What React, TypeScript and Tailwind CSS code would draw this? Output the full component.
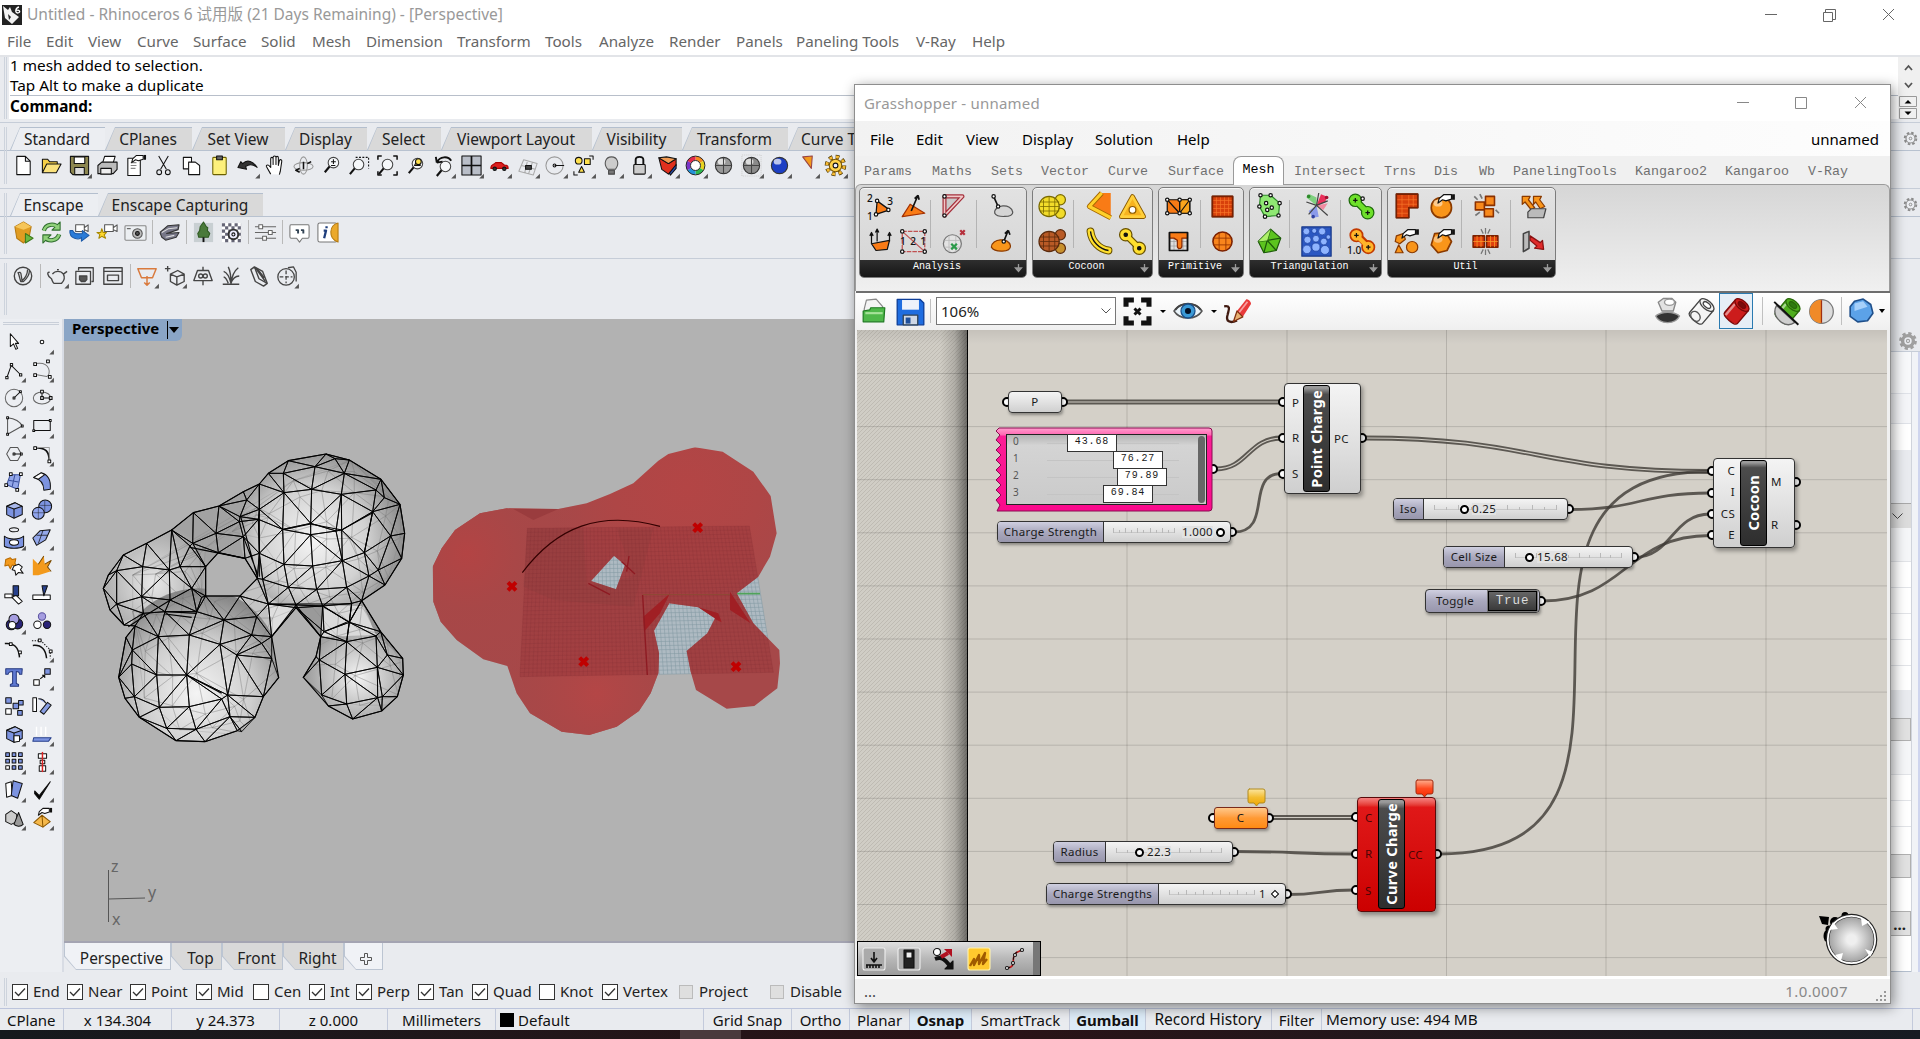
import React from 'react';

type Pt = [number, number];

/* ---------- geometry helpers ---------- */

function delaunay(pts: Pt[]): number[][] {
  const n = pts.length;
  const all: Pt[] = [...pts, [-9000, -9000], [9000, -9000], [600, 12000]];
  let tris: number[][] = [[n, n + 1, n + 2]];
  const inCircle = (t: number[], p: Pt) => {
    const [a, b, c] = t.map((i) => all[i]);
    const d = 2 * (a[0] * (b[1] - c[1]) + b[0] * (c[1] - a[1]) + c[0] * (a[1] - b[1]));
    if (Math.abs(d) < 1e-9) return true;
    const q = (v: Pt) => v[0] * v[0] + v[1] * v[1];
    const ux = (q(a) * (b[1] - c[1]) + q(b) * (c[1] - a[1]) + q(c) * (a[1] - b[1])) / d;
    const uy = (q(a) * (c[0] - b[0]) + q(b) * (a[0] - c[0]) + q(c) * (b[0] - a[0])) / d;
    return Math.hypot(p[0] - ux, p[1] - uy) < Math.hypot(a[0] - ux, a[1] - uy);
  };
  for (let i = 0; i < n; i++) {
    const bad = tris.filter((t) => inCircle(t, all[i]));
    const count: Record<string, number[]> = {};
    const seen: Record<string, number> = {};
    bad.forEach((t) =>
      [[t[0], t[1]], [t[1], t[2]], [t[2], t[0]]].forEach((e) => {
        const k = Math.min(e[0], e[1]) + '_' + Math.max(e[0], e[1]);
        seen[k] = (seen[k] || 0) + 1;
        count[k] = e;
      })
    );
    tris = tris.filter((t) => !bad.includes(t));
    Object.keys(seen).forEach((k) => {
      if (seen[k] === 1) tris.push([count[k][0], count[k][1], i]);
    });
  }
  return tris.filter((t) => t.every((i) => i < n));
}

function inside(p: Pt, poly: Pt[]) {
  let r = false;
  for (let i = 0, j = poly.length - 1; i < poly.length; j = i++) {
    const a = poly[i];
    const b = poly[j];
    if (a[1] > p[1] !== b[1] > p[1] && p[0] < ((b[0] - a[0]) * (p[1] - a[1])) / (b[1] - a[1]) + a[0]) r = !r;
  }
  return r;
}

const toPath = (p: Pt[]) => 'M' + p.map((v) => v.join(' ')).join('L') + 'Z';

/* ---------- wireframe mesh ---------- */

const outline: Pt[] = [
  [310, 835], [325, 795], [370, 735], [440, 700], [515, 660], [580, 608], [657, 588], [730, 545], [778, 522], [805, 490],
  [865, 452], [978, 432], [1048, 450], [1143, 508], [1200, 583], [1214, 670], [1205, 745], [1155, 825], [1085, 872],
  [1142, 965], [1208, 1045], [1210, 1095], [1192, 1160], [1145, 1203], [1058, 1227], [985, 1188], [910, 1102], [948, 1040],
  [962, 980], [888, 893], [815, 980], [836, 1103], [790, 1160], [765, 1222], [712, 1262], [615, 1295], [528, 1292],
  [418, 1222], [375, 1165], [356, 1102], [378, 982], [405, 948], [372, 945], [330, 900],
];
const meshHole: Pt[] = [[617, 770], [655, 728], [735, 745], [772, 805], [720, 858], [617, 858]];
const inner: Pt[] = [
  [850, 490], [945, 470], [1005, 446], [1033, 490], [1128, 540], [852, 548], [935, 538], [1024, 553], [1153, 563],
  [778, 598], [848, 658], [932, 640], [1025, 660], [1118, 605], [730, 680], [775, 628], [1008, 663], [932, 674],
  [1172, 678], [1093, 728], [778, 730], [852, 763], [938, 768], [1027, 752], [1135, 780], [1107, 798], [788, 808],
  [865, 832], [950, 838], [1040, 832], [805, 882], [888, 885], [968, 888], [1055, 880], [718, 635], [648, 670],
  [570, 708], [578, 700], [508, 780], [540, 770], [428, 770], [350, 782], [425, 860], [510, 870], [350, 882],
  [575, 835], [430, 910], [720, 620], [740, 570], [605, 862], [770, 920], [672, 930], [590, 905], [495, 905],
  [475, 980], [568, 975], [660, 1003], [755, 975], [397, 1020], [710, 1035], [815, 1045], [395, 1062], [470, 1095],
  [560, 1095], [665, 1167], [683, 1155], [403, 1160], [478, 1192], [568, 1190], [690, 1220], [500, 1255], [588, 1258],
  [1048, 937], [972, 965], [1040, 995], [1128, 978], [1162, 1035], [958, 1050], [1035, 1093], [1132, 1072], [1133, 1163],
  [965, 1155], [1040, 1182], [1147, 1160], [785, 1000], [725, 1265],
];

function edges(points: Pt[]) {
  return delaunay(points)
    .filter((t) => {
      const c: Pt = [
        (points[t[0]][0] + points[t[1]][0] + points[t[2]][0]) / 3,
        (points[t[0]][1] + points[t[1]][1] + points[t[2]][1]) / 3,
      ];
      return inside(c, outline) && !inside(c, meshHole);
    })
    .map((t) => toPath(t.map((i) => points[i])))
    .join('');
}

const frontEdges = edges([...outline, ...meshHole, ...inner]);
const backEdges = edges(inner.map(([x, y], i): Pt => [x + 30 + (i % 3) * 9, y + 22 - (i % 4) * 9]));

const redShape =
  'M38 440L65 385L105 330L180 280L260 265L415 267L500 250L570 222L640 190L715 122L745 102L825 82L908 95L1000 155L1052 228L1070 340L1050 410L1015 470L950 520L1000 610L1078 690L1080 730L1072 805L1003 858L920 866L828 810L812 755L800 693L862 640L885 595L835 562L748 550L702 632L717 700L715 760L692 820L657 873L590 920L508 945L425 935L330 880L290 820L262 738L190 718L110 660L62 605L40 545Z M582 407L615 435L588 508L513 483Z';

function Scene() {
  const gridLines: string[] = [];
  for (let i = 0; i <= 60; i++) {
    const t = i / 60;
    gridLines.push(`M${322 + 666 * t} ${325 - 7 * t}L${300 + 760 * t} ${770 - 13 * t}`);
  }
  for (let i = 0; i <= 36; i++) {
    const t = i / 36;
    gridLines.push(`M${322 - 22 * t} ${325 + 445 * t}L${988 + 72 * t} ${318 + 439 * t}`);
  }
  const grid = gridLines.join('');
  return (
    <svg className="absolute left-0 top-0" width="792" height="624" viewBox="64 319 792 624">
      <defs>
        <radialGradient id="g1" gradientUnits="userSpaceOnUse" cx="940" cy="690" r="290">
          <stop offset="0" stopColor="#f4f4f4" />
          <stop offset=".55" stopColor="#d2d2d2" />
          <stop offset="1" stopColor="#828282" />
        </radialGradient>
        <radialGradient id="g2" gradientUnits="userSpaceOnUse" cx="590" cy="1150" r="300">
          <stop offset="0" stopColor="#f4f4f4" />
          <stop offset=".55" stopColor="#cfcfcf" />
          <stop offset="1" stopColor="#888" />
        </radialGradient>
        <radialGradient id="g3" gradientUnits="userSpaceOnUse" cx="1075" cy="1100" r="170">
          <stop offset="0" stopColor="#f4f4f4" />
          <stop offset="1" stopColor="#969696" />
        </radialGradient>
        <radialGradient id="g4" gradientUnits="userSpaceOnUse" cx="460" cy="820" r="180">
          <stop offset="0" stopColor="#e8e8e8" />
          <stop offset="1" stopColor="#a2a2a2" />
        </radialGradient>
        <radialGradient id="r1" gradientUnits="userSpaceOnUse" cx="800" cy="200" r="400">
          <stop offset="0" stopColor="#b34545" />
          <stop offset=".55" stopColor="#ae4646" />
          <stop offset="1" stopColor="#a64849" />
        </radialGradient>
        <radialGradient id="r2" gradientUnits="userSpaceOnUse" cx="140" cy="400" r="380">
          <stop offset="0" stopColor="#b34444" />
          <stop offset=".45" stopColor="#a84747" stopOpacity=".8" />
          <stop offset="1" stopColor="#a84747" stopOpacity="0" />
        </radialGradient>
        <radialGradient id="r3" gradientUnits="userSpaceOnUse" cx="530" cy="820" r="280">
          <stop offset="0" stopColor="#b44646" />
          <stop offset=".6" stopColor="#aa4747" stopOpacity=".7" />
          <stop offset="1" stopColor="#a84747" stopOpacity="0" />
        </radialGradient>
        <clipPath id="cm">
          <path d={toPath(outline)} />
        </clipPath>
        <clipPath id="cr">
          <path d={redShape} clipRule="evenodd" />
        </clipPath>
      </defs>
      <g transform="translate(0 310) scale(.33333)">
        <g clipPath="url(#cm)">
          <rect x="300" y="430" width="930" height="870" fill="#c4c4c4" />
          <path d="M300 950V800L520 640L780 500V720L600 880Z" fill="url(#g4)" />
          <circle cx="970" cy="670" r="250" fill="url(#g1)" />
          <circle cx="595" cy="1080" r="245" fill="url(#g2)" />
          <circle cx="1065" cy="1090" r="155" fill="url(#g3)" />
          <path d="M968 888H1085L1130 975L965 980Z" fill="#dadada" />
          <path d="M800 885H890L815 980Z" fill="#dedede" />
          <path d="M890 890L968 888L962 980Z" fill="#9a9a9a" />
          <path d="M1085 872L1208 1045L1128 975Z" fill="#949494" />
          <path d={backEdges} fill="none" stroke="#777" strokeOpacity=".35" strokeWidth="2" />
        </g>
        <path d={toPath(meshHole)} fill="#b2b2b2" />
        <path d={toPath(outline) + toPath(meshHole)} fill="none" stroke="#000" strokeWidth="3.400" strokeLinejoin="round" />
        <path d={frontEdges} fill="none" stroke="#000" strokeWidth="2.600" strokeLinejoin="round" />
        <path
          d="M570 712L735 745M778 522V800M722 620L772 800M730 680L772 790M500 905L590 910M515 868L430 920L385 950M495 912L575 922M560 1095L665 1150M1118 605L1093 728M845 660L932 642L1025 660L1118 608M805 882H1055M888 885L962 980M888 885L815 980M968 888L962 980M1055 880L1040 995M1040 937L972 965M968 888L1048 937M1085 872L1048 937"
          fill="none" stroke="#000" strokeWidth="3.400"
        />
      </g>
      <g transform="translate(420 420) scale(.33333)">
        <path d="M322 325L988 318L1060 757L300 770Z" fill="#aebac2" />
        <path d={grid} stroke="#8299a2" strokeWidth="1.600" />
        <path d="M900 521H1020" stroke="#4fa35a" strokeWidth="5" />
        <g clipPath="url(#cr)">
          <rect width="1100" height="960" fill="url(#r1)" />
          <circle cx="140" cy="400" r="380" fill="url(#r2)" />
          <circle cx="530" cy="820" r="280" fill="url(#r3)" />
          <path d="M322 325L988 318L1060 757L300 770Z" fill="#9a383c" fillOpacity=".5" />
          <path d="M322 325H490L500 500L640 470L590 325H700L640 560L400 540L310 500Z" fill="#6f3a3c" fillOpacity=".14" />
          <path d={grid} stroke="#6e2a30" strokeOpacity=".24" strokeWidth="1.600" />
          <path d="M280 267L415 267L340 300Z" fill="#9a3c3e" />
          <path d="M750 520L670 590L672 635L720 580Z M930 515L992 610L930 570Z M835 562L895 580L905 607L880 595Z" fill="#a01f24" />
        </g>
        <path d="M505 490L570 524M605 425L645 462M627 408L620 455M668 525L682 765" stroke="#8e1a22" strokeWidth="4" fill="none" />
        <path d="M668 524H930" stroke="#8c4a34" strokeWidth="3" />
        <path d="M307 458C410 320 540 270 720 319" fill="none" stroke="#300" strokeWidth="3.400" />
        {[[833, 323], [276, 499], [491, 725], [948, 740]].map(([x, y]) => (
          <path key={x} d={`M${x - 12} ${y - 12}L${x + 12} ${y + 12}M${x + 12} ${y - 12}L${x - 12} ${y + 12}`} stroke="#c00000" strokeWidth="12" />
        ))}
      </g>
      <path d="M108.500 870V922M108.500 899L145 898" stroke="#555" fill="none" />
    </svg>
  );
}

/* ---------- icons ---------- */

const K = '#111';
const B = '#7c93e0';
const O = '#f39a1c';

function Ic({ children, tri, size = 24 }: { children?: React.ReactNode; tri?: boolean; size?: number }) {
  return (
    <svg width={size} height={size} viewBox="0 0 24 24" fill="none" stroke={K} strokeWidth="1.1" strokeLinejoin="round" className="block shrink-0 overflow-visible">
      {children}
      {tri && <path d="M25 20.500V25.500H20Z" fill="#555" stroke="none" />}
    </svg>
  );
}

const sq = (x: number, y: number, f = '#fff', s = 3) => <rect x={x} y={y} width={s} height={s} fill={f} />;
const hand = <><path d="M9 5L13 1.500H20V5.500L15 7L12 6L8 9Z" fill="#fff" /><path d="M20.500 1H23V6H20.500Z" fill="#111" stroke="none" /></>;
const glass = (x: number, y: number) => (
  <>
    <circle cx={x} cy={y} r="5.500" fill="#f6f8fa" stroke="#444" />
    <path d={`M${x - 4} ${y + 4}L${x - 9} ${y + 10}`} strokeWidth="2.200" />
  </>
);
const ball = (c: string) => (
  <>
    <circle cx="12" cy="12" r="8.500" fill={c} stroke="#333" />
    <ellipse cx="10" cy="8" rx="4" ry="3" fill="#fff" fillOpacity=".7" stroke="none" />
  </>
);

const std: [React.ReactNode, boolean?][] = [
  [<path d="M5 2.500H14L19 7.500V21.500H5ZM14 2.500V7.500H19" fill="#fff" />],
  [<><path d="M2.500 19.500V5.500H8L10 8H18V11" fill="#f7d046" /><path d="M2.500 19.500L7 10.500H22L17 19.500Z" fill="#fbe27c" /></>],
  [<><path d="M2.500 2.500H21.500V21.500H5L2.500 19Z" fill="#8d8750" /><rect x="6.500" y="3" width="11" height="7" fill="#fff" /><rect x="7" y="14" width="10" height="7.500" fill="#ddd" /></>, true],
  [<><path d="M7 9L9 2.500H20L18 9" fill="#fff" /><path d="M2 12L6 8.500H22V16L18 20.500H2Z" fill="#bbb" /><path d="M5 15H16V21H5Z" fill="#eee" /></>],
  [<><path d="M4 4.500H17V22.500H4Z" fill="#fff" /><path d="M7 9H13M7 12H13M7 15H12" stroke="#888" />{hand}</>],
  [<><path d="M7 2L15 16M17 2L9 16" /><circle cx="7.500" cy="19" r="2.500" /><circle cx="16.500" cy="19" r="2.500" /></>],
  [<><path d="M3.500 3.500H12V15.500H3.500Z" fill="#fff" /><path d="M9 8.500H16L20.500 12V21.500H9Z" fill="#fff" /></>],
  [<><rect x="5" y="3.500" width="14" height="18" rx="1" fill="#fdf07c" stroke="#6b6000" /><rect x="9" y="2" width="6" height="4" fill="#666" /></>],
  [<path d="M2 14L5 8L7 10C12 5 18 8 22 14C17 10 13 11 10 13L11 16Z" fill="#333" />, true],
  [<path d="M7 21L2.500 13C2 11 5 11 6 13L7 14V5C7 3 9.500 3 9.500 5V11V3.500C9.500 1.500 12.500 1.500 12.500 3.500V11V4C12.500 2 15 2 15 4V12L16 7C17 5 19 6 18.500 8L17 18L16 21.500" fill="#fff" />],
  [<><ellipse cx="12" cy="13" rx="10" ry="4" stroke="#999" /><ellipse cx="12" cy="12" rx="4" ry="9" stroke="#999" /><path d="M12 8V16M8 15L4 17L8 19M16 10L20 8" strokeWidth="1.600" /></>],
  [<>{glass(14, 9)}<path d="M11.500 8H16.500M14 5.500V10.500M11.500 12H16" /></>],
  [<>{glass(11, 11)}<path d="M8 3.500H21.500V15" strokeDasharray="2 1.500" /></>],
  [<>{glass(12, 11)}<path d="M2 6V2H6M18 2H22V6M22 18V22H18M2 18V22H6" strokeWidth="1.600" /></>],
  [<>{glass(14, 10)}<path d="M14 6L17 12H11Z" fill="#ffd42a" /><circle cx="15" cy="8" r="3" fill="#ffe14d" /></>],
  [<>{glass(14, 13)}<path d="M5 9C8 2 17 2 20 7M5 9L4 3M5 9L11 8" strokeWidth="2" /></>, true],
  [<><rect x="2" y="2" width="20" height="20" fill="#b9bec8" /><path d="M12 2V22M2 12H22" strokeWidth="1.800" /></>, true],
  [<><path d="M3 14C3 11 6 11.500 8 9H14L17 11.500C21 11.500 21 13 21 15H3Z" fill="#dc2020" stroke="#a00" /><circle cx="7" cy="15.500" r="1.800" fill="#333" /><circle cx="17" cy="15.500" r="1.800" fill="#333" /></>, true],
  [<><path d="M3 18L8 6L22 10L18 22ZM6 12L20 16M12 7L9 20M17 9L13 21" stroke="#aaa" /><path d="M10 12H16V16H10Z" fill="#444" /></>, true],
  [<><circle cx="11" cy="12" r="9" stroke="#999" /><path d="M11 12H21" /><circle cx="11" cy="12" r="1.500" /></>, true],
  [<><circle cx="7" cy="7" r="3.500" fill="#ffe14d" /><rect x="13" y="5" width="6" height="6" fill="#ffe14d" /><path d="M10 13L13 19H7Z" fill="#ffe14d" /><path d="M18 2H22V6M2 18V22H6" /></>, true],
  [<><path d="M8 16C3 10 6 3 12 3C18 3 21 10 16 16Z" fill="#ccc" stroke="#555" /><path d="M9 17H15V21H9Z" fill="#777" stroke="#444" /></>, true],
  [<><path d="M8 11V6C8 2 16 2 16 6V11" strokeWidth="2" /><rect x="6" y="11" width="12" height="10" rx="1" fill="#ccc" /></>, true],
  [<><path d="M3 4L13 10L21 5V12L13 21L6 16Z" fill="#e0301e" /><path d="M14 20L21 11V15L15 22Z" fill="#2b50b8" /><path d="M3 4L11 3L21 5L13 10Z" fill="#f49b52" /></>, true],
  [<g strokeWidth="4.500"><path d="M12 4.500A7.500 7.500 0 0 1 18.500 8.200" stroke="#f58a1f" /><path d="M18.500 8.200A7.500 7.500 0 0 1 18.500 15.800" stroke="#e8d320" /><path d="M18.500 15.800A7.500 7.500 0 0 1 12 19.500" stroke="#2db84d" /><path d="M12 19.500A7.500 7.500 0 0 1 5.500 15.800" stroke="#2492d8" /><path d="M5.500 15.800A7.500 7.500 0 0 1 5.500 8.200" stroke="#7a34c8" /><path d="M5.500 8.200A7.500 7.500 0 0 1 12 4.500" stroke="#e22a4c" /><circle cx="12" cy="12" r="9.800" stroke="#222" strokeWidth="1" /><circle cx="12" cy="12" r="5.200" stroke="#222" strokeWidth="1" fill="#fff" /></g>, true],
  [<>{ball('#999')}<path d="M12 3.500V20.500M3.500 12H20.500" stroke="#444" /></>],
  [<><rect x="2" y="1" width="20" height="22" stroke="#ccc" strokeDasharray="1 1" />{ball('#8a8a8a')}<path d="M12 3.500V20.500M3.500 12H20.500" stroke="#444" /></>, true],
  [ball('#1d3fc4'), true],
  [<path d="M7 3L17 2L16 15Z" fill={O} stroke="#944" />, true],
  [<><circle cx="12" cy="12" r="9" stroke="#4a3600" strokeWidth="4.500" strokeDasharray="3.800 3.250" /><circle cx="12" cy="12" r="9" stroke="#f5b832" strokeWidth="3" strokeDasharray="3 4.050" strokeDashoffset="-.4" /><circle cx="12" cy="12" r="6.500" fill="#ffd24a" stroke="#7a5400" /><circle cx="12" cy="12" r="2.500" fill="#eef" /></>, true],
];

const ens: (React.ReactNode | '|')[] = [
  <><path d="M12 1L20 6L18 16L12 23L5 18L3 6Z" fill="#e09c22" stroke="#b57a12" /><path d="M12 1L20 6L12 9L3 6Z" fill="#f6c65a" stroke="none" /><path d="M14 13L22 18L14 23Z" fill="#6cb83f" stroke="#3d7a1c" /></>,
  <g><path d="M4 10C6 3 15 2 19 7M20 14C18 21 9 22 5 17" stroke="#2f6e2e" strokeWidth="4.500" /><path d="M21 1V9.500H12.500ZM3 23V14.500H11.500Z" fill="#8fd07a" stroke="#2f6e2e" /><path d="M4 10C6 3 15 2 19 7M20 14C18 21 9 22 5 17" stroke="#8fd07a" strokeWidth="2.500" /></g>,
  <><path d="M8 4H17V11H8ZM17 7L21 4V11L17 9" fill="#fff" stroke="#555" /><path d="M2 10C1 19 12 20 14 17V21L22 15L15 10V13C10 14 6 13 5 10Z" fill="#2a7bd8" stroke="#1c5aa8" /></>,
  <><path d="M9 4H18V11H9ZM18 7L22 4V11L18 9" fill="#fff" stroke="#555" /><path d="M6 8L7.500 12H11L8.500 14.500L10 18L6 16L3 18L4 14L1 12H5Z" fill="#ffd82e" stroke="#a88800" /></>,
  <><rect x="1" y="5" width="22" height="15" rx="1" fill="#eceff2" stroke="#888" /><circle cx="14" cy="13" r="5" fill="#bbb" stroke="#555" /><circle cx="14" cy="13" r="2" fill="#555" /><path d="M3 8H7" stroke="#555" /></>,
  '|',
  <><path d="M2 12L10 5L22 4L21 9L9 13L22 12L19 17L8 20L4 17L2 12" fill="#778" stroke="#333" /><path d="M4 12L11 8L20 7M8 17L17 15" stroke="#ddd" /></>,
  '|',
  <><rect x="2" y="2" width="20" height="20" fill="#c8cfd2" stroke="none" /><path d="M12 1L15 6L16.500 7L16 10L18.500 13L17 17H7L6 13L8 10L8.500 6Z" fill="#4a7a3a" stroke="#2f5a22" /><path d="M12 17V22" strokeWidth="2" /></>,
  <><rect x="2" y="2" width="20" height="20" fill="#fff" stroke="none" /><path d="M2 4H22M2 10.500H22M2 17H22" stroke="#667" strokeWidth="3.300" strokeDasharray="3.300 3.300" /><path d="M5.300 7.200H22M5.300 13.800H22M5.300 20.400H22" stroke="#667" strokeWidth="3.300" strokeDasharray="3.300 3.300" /><circle cx="14" cy="14" r="5" fill="#eef" stroke="#333" strokeWidth="2" /><circle cx="14" cy="14" r="1.600" /></>,
  '|',
  <g stroke="#666"><path d="M1 6H23M1 12H23M1 18H23" /><rect x="5" y="4" width="4" height="4" fill="#fff" /><rect x="15" y="10" width="4" height="4" fill="#fff" /><rect x="9" y="16" width="4" height="4" fill="#fff" /></g>,
  '|',
  <><path d="M3 4H21Q22 4 22 6V16Q22 18 21 18H15L12 22L9 18H3Q2 18 2 16V6Q2 4 3 4Z" fill="#fff" stroke="#777" /><path d="M8 9.500H10.500V13M13.500 9.500H16V13" strokeWidth="2" stroke="#345" /></>,
  <><rect x="2" y="2" width="20" height="20" rx="2" fill="#fff" stroke="#777" /><path d="M23 2C14 4 12 18 23 22Z" fill="#eba92b" stroke="#b57a12" /><path d="M8 10H10.500L8.500 18M11 5.500V7.500" stroke="#1f3f7d" strokeWidth="2.400" /></>,
];

const vr: [React.ReactNode | '|', boolean?][] = [
  [<><circle cx="12" cy="12" r="9.500" strokeWidth="1.500" stroke="#444" /><path d="M6 9C8 7 10 8 10 11L11 17C14 15 17 10 17 5M7 9L9.500 18H12.500C16 15 19 10 19 6" strokeWidth="1.400" stroke="#444" /></>],
  ['|'],
  [<path d="M4 8C1 7 1 12 6 15C7 18 8 20 9 20H17C19 18 21 14 19 10L23 7M7 10C10 6 16 6 19 10M12 5H14" strokeWidth="1.500" stroke="#444" />, true],
  [<g stroke="#444" strokeWidth="1.400"><path d="M5 6V3H21V18H19" /><path d="M2 7H18V21H2Z" /><path d="M6 12H14V16L12 18H8L6 16Z" fill="#555" /></g>],
  [<g stroke="#444" strokeWidth="1.500"><rect x="2" y="3" width="20" height="18" /><path d="M2 7H22M6 11H18V17H6Z" /></g>],
  ['|'],
  [<g stroke="#d97a3d" strokeWidth="1.600"><path d="M2 4H22L18 14H6ZM12 12V22M9 19L12 22L15 19" /></g>, true],
  [<g stroke="#444" strokeWidth="1.500"><path d="M7 10L15 6L22 10V18L14 22L7 18ZM7 10L14 13L22 10M14 13V22M4 1V7M1 4H7" /></g>, true],
  [<g stroke="#444" strokeWidth="1.500"><path d="M6 6H18L22 17H2ZM12 2V6M12 17V22" /><circle cx="9.500" cy="12" r="2.200" /><circle cx="14.500" cy="12" r="2.200" /></g>],
  [<path d="M12 20C10 12 7 8 4 7M12 20C12 12 11 6 9 2M12 20C13 12 16 6 20 3M12 20C14 14 17 12 21 12M4 13C7 14 8 17 9 20M3 21H21" stroke="#444" strokeWidth="1.500" />],
  [<g stroke="#444" strokeWidth="1.500"><path d="M7 2L16 7L21 20L12 15ZM7 2L3 5L8 18L17 23L21 20" /><path d="M8 3L19 18M10 4L18 14" /></g>],
  [<g stroke="#444" strokeWidth="1.400"><circle cx="11" cy="13" r="9" /><path d="M11 6V20M4 13H18" strokeDasharray="4 2" /><path d="M13 3L19 2L22 8V18" /></g>, true],
];

const cube = (f: string) => <><path d="M4 8L13 4L21 8V17L12 21L4 17Z" fill={f} /><path d="M4 8L13 4L21 8L12 11Z" fill="#fff" fillOpacity=".35" /><path d="M12 11V21" /></>;

const side: [React.ReactNode, boolean?][] = [
  [<path d="M8 3L8 17L11.500 14L14 20L16 19L13.500 13.500H17Z" fill="#fff" />],
  [<circle cx="12" cy="12" r="2" fill="#fff" />, true],
  [<><path d="M4 21L9 7L20 18" />{sq(3, 19, '#fff', 2.5)}{sq(8, 5, '#fff', 2.5)}{sq(18, 16, '#fff', 2.5)}</>, true],
  [<><path d="M5 5C22 2 22 18 17 19L5 17" stroke="#777" />{sq(3, 4)}{sq(17, 1)}{sq(3, 16)}{sq(19, 18)}</>, true],
  [<><circle cx="12" cy="12" r="9.500" stroke="#666" /><path d="M12 12L18.500 5.500" />{sq(11, 11, '#fff', 2)}{sq(18, 4, '#fff', 2)}</>, true],
  [<><ellipse cx="12" cy="12" rx="9.500" ry="6.500" stroke="#666" /><path d="M12 12V5.500M12 12H21" />{sq(10.500, 3.500)}{sq(10.500, 10.500)}{sq(20, 10.500)}</>, true],
  [<><path d="M5 3C13 4 19 8 21 12L5 21Z" stroke="#555" />{sq(4, 2, '#fff', 2)}{sq(20, 11, '#fff', 2)}{sq(4, 20, '#fff', 2)}</>, true],
  [<><rect x="3" y="6" width="18" height="11" />{sq(2, 16, '#fff', 2)}{sq(20, 5, '#fff', 2)}</>, true],
  [<><path d="M4 12L8 5H16L20 12L16 19H8Z" stroke="#555" /><path d="M12 12H20" />{sq(11, 11, '#fff', 2)}{sq(19, 11, '#fff', 2)}</>, true],
  [<><path d="M4 5C16 5 20 9 20 20" strokeWidth="2" /><path d="M4 5H20V20" stroke="#999" />{sq(3, 4)}{sq(18.500, 18.500)}</>, true],
  [<><path d="M8 4L19 4L16 20L4 15Z" fill="#93a7ea" stroke="#3a4f9c" /><path d="M13 4L10 17M6 10L17 12" stroke="#3a4f9c" />{sq(7, 2)}{sq(18, 2)}{sq(14, 19)}{sq(2, 14)}</>, true],
  [<><path d="M3 7L11 2C19 4 22 10 21 20L14 21C14 14 11 9 3 7Z" fill={B} /><path d="M3 7L11 2L15 4L8 9Z" fill="#fff" /></>, true],
  [cube(B), true],
  [<><circle cx="15.500" cy="8" r="7" fill={B} /><circle cx="8" cy="15.500" r="6.500" fill="#90a5ee" /><path d="M2 15H14M8 9V22M10 7H22M15 2V14" strokeWidth=".5" /></>, true],
  [<><ellipse cx="12" cy="3" rx="5" ry="2.200" /><path d="M1.500 10C6 14 18 14 22.500 10V21C18 24 6 24 1.500 21Z" fill={B} /><ellipse cx="12" cy="17" rx="5" ry="3" fill="#fff" /></>, true],
  [<><path d="M2 12L10 4L21 3L16 14L6 20Z" fill="#93a7ea" /><path d="M6 9L18 9M13 4L8 18" strokeWidth=".8" /></>, true],
  [<><path d="M3 5L8 3L10 5L14 4L13 9L15 12L10 11L8 15L6 11L2 12Z" fill={O} stroke="#b86a00" /><path d="M12 12L17 10L21 13L19 16L22 20L17 19L14 22L13 17L10 16Z" fill="#fff" /></>],
  [<><path d="M2 4L8 10L14 1L15 10L22 6L18 13L21 18L8 22H2Z" fill={O} stroke="none" /><path d="M8 10L14 1M15 10L22 6L18 13L22 18" stroke="#7a4a00" /></>],
  [<><path d="M2 12H10V16H2Z" fill="#fff" /><path d="M10 16L14 13L21 20L17 23Z" fill="#fff" /><path d="M11 3H17V14L11 14Z" fill="#27408c" /></>],
  [<><path d="M2 13H21V18H2Z" fill="#fff" /><path d="M12 3H18L14 14Z" fill="#27408c" /></>],
  [<><circle cx="9" cy="15" r="5.500" fill="#2a2478" /><circle cx="16" cy="14" r="5.500" fill="#2a2478" /><circle cx="12" cy="9" r="5.500" fill="#a59de0" /><circle cx="10" cy="15.500" r="4" fill="#fff" /></>, true],
  [<><circle cx="12" cy="6" r="4" fill="#a59de0" stroke="#5b52a0" /><circle cx="7" cy="15" r="4" fill="#fff" /><circle cx="17.500" cy="15" r="4" fill="#2a2478" /></>],
  [<><path d="M2 5C12 4 17 9 18 20" strokeWidth="1.600" />{sq(7, 4)}{sq(17, 13)}</>],
  [<><path d="M1 2H11L21 12V21" strokeDasharray="1.500 1.500" /><path d="M2 7C12 6 16 12 17 21" strokeWidth="1.600" />{sq(8, 0)}{sq(20, 12)}</>, true],
  [<path d="M3 2H21L20.500 8H18C18 6 17 5 14.500 5V18L17 19V21H8V19L10.500 18V5C7 5 6 6 5.500 8H3Z" fill="#5f79d2" stroke="#26387e" />],
  [<><rect x="15" y="2" width="6" height="6" fill={B} /><rect x="3" y="14" width="6" height="6" fill="#fff" /><path d="M10 13L15 9M12 9H15V12" /></>, true],
  [<>{sq(3, 3, B, 6)}{sq(11, 9, B, 6)}{sq(17, 6, B, 5)}{sq(16, 17, B, 5)}{sq(3, 15, '#fff', 6)}</>],
  [<><path d="M2 3H6V18H2Z" fill="#fff" /><path d="M8 4C13 4 15 6 16 9M10 18L18 8L22 11L14 21Z" fill={B} fillOpacity=".9" /></>],
  [<>{cube(B)}<path d="M12 14L18 14V20L12 21Z" fill="#fff" /></>, true],
  [<><path d="M3 16H22L19 20H2Z" fill={B} stroke="#27408c" /><path d="M6 4V14M11 4V14M16 4V14" stroke="#fff" strokeWidth="1.500" /></>, true],
  [<>{[3, 10, 17].map((x) => [2, 9, 16].map((y) => <rect key={x + y * 50} x={x} y={y} width="4" height="4" fill={y === 16 && x === 3 ? '#fff' : B} />))}</>, true],
  [<><rect x="8" y="3" width="9" height="5" fill="#fff" /><rect x="10" y="10" width="5" height="4" fill="#fff" /><rect x="9" y="16" width="7" height="6" fill="#fff" /><path d="M12.500 1V23" stroke="#d22" strokeWidth="1.600" /></>, true],
  [<><path d="M3 5L9 3L10 18L4 20Z" fill="#fff" /><path d="M11 2L21 5L16 21L9 18Z" fill={B} /></>, true],
  [<path d="M4 13L9 18L21 3L9 22L4 16Z" fill="#000" />, true],
  [<><path d="M3 8L9 4L15 8V16L9 19L3 16Z" fill="#ccc" /><path d="M17 6L22 19C19 22 14 21 12 19Z" fill="#999" /></>, true],
  [<><path d="M3 17L12 9L21 16L13 22Z" fill="#f5b84a" stroke="#8a5600" /><path d="M12 9L13 22" stroke="#8a5600" />{hand}</>, true],
];

const P = '#f97b16';
const R = '#d8410c';
const gridIn = (x: number, y: number, s: number, n: number) => {
  let d = '';
  for (let i = 0; i <= n; i++) d += `M${x + (s * i) / n} ${y}V${y + s}M${x} ${y + (s * i) / n}H${x + s}`;
  return d;
};
const dot = (x: number, y: number) => <circle cx={x} cy={y} r="1.500" fill="#fff" />;
const num = (x: number, y: number, t: string, s = 9) => (
  <text x={x} y={y} fontSize={s} fill="#111" stroke="none" fontFamily="Noto Sans" fontWeight="500">{t}</text>
);

type Col = [React.ReactNode, React.ReactNode, string] | '|';
const ribbon: { name: string; w: string; cols: Col[] }[] = [
  {
    name: 'Analysis', w: 'w-[168px]',
    cols: [
      [<><path d="M9 7L20 15L8 19Z" fill={P} />{dot(9, 7)}{dot(19, 15)}{dot(8, 19)}{num(0, 8, '2')}{num(18, 11, '3')}{num(0, 24, '1')}</>,
        <><path d="M4 14L20 11L18 19L8 20Z" fill={P} /><path d="M4 14V5M20 12V4M9 12V2M2.500 7L4 4L5.500 7M18.500 7L20 4L21.500 7M7.500 4L9 1L10.500 4" /></>, 'w-[33px] ml-1'],
      [<><path d="M2 21L9 10L22 18Z" fill={P} stroke="#a33000" /><path d="M10 16L16 2M16 2L13 5M16 2L17 6" strokeWidth="1.500" /></>,
        <><rect x="2" y="3" width="20" height="18" stroke="#c05050" strokeDasharray="4 1" /><path d="M2 3L22 21" stroke="#c05050" />{dot(2, 3)}{dot(22, 3)}{dot(2, 21)}{dot(22, 21)}{num(0, 15, '1')}{num(9, 15, '2')}{num(18, 15, '1')}</>, 'w-[33px]'],
      '|',
      [<><path d="M4 3L20 3L4 20Z" fill="#c9c9c9" stroke="#a5303c" strokeWidth="3.600" /><path d="M4 3L20 3L4 20Z" stroke="#f0c8c8" strokeWidth="1.400" />{dot(4, 3)}{dot(4, 20)}</>,
        <><circle cx="11" cy="14" r="8" fill="#e3e3e3" stroke="#777" /><path d="M4 11H18M4 17H18M8 7V21M14 7V21" stroke="#bbb" strokeWidth=".8" /><path d="M10 14L15 19M15 14L10 19" stroke="#2c9a4a" strokeWidth="2" /><path d="M18 2L22 6M22 2L18 6" stroke="#b5303c" strokeWidth="2" /></>, 'w-[45px]'],
      '|',
      [<><path d="M6 18C5 10 21 9 22 17C22 22 8 22 6 18Z" fill="#d5d5d5" stroke="#555" /><path d="M5 3L9 12" strokeWidth="1.500" />{dot(5, 3)}{dot(9, 12)}</>,
        <><path d="M3 17C3 9 19 8 20 16C20 22 6 22 3 17Z" fill="#f9951a" stroke="#8a3a00" /><path d="M14 12L18 2M18 2L15 5M18 2L19.500 6" strokeWidth="1.500" />{dot(14, 12)}</>, 'flex-1'],
    ],
  },
  {
    name: 'Cocoon', w: 'w-[121px]',
    cols: [
      [<><g fill="#f2dc2a" stroke="#7a6a00"><circle cx="19" cy="6" r="4.500" /><circle cx="19" cy="18" r="4.500" /><circle cx="9" cy="12" r="9" /></g><path d="M4 6V18M9 3V21M14 5V19M1 8H18M1 12H18M1 16H18" stroke="#7a6a00" strokeWidth=".7" /></>,
        <><g fill="#b85a26" stroke="#5a2a0c"><circle cx="19" cy="6" r="4.500" /><circle cx="19" cy="18" r="4.500" fill="#c8912e" /><circle cx="9" cy="12" r="9" /></g><path d="M4 6V18M9 3V21M14 5V19M1 8H18M1 12H18M1 16H18" stroke="#5a2a0c" strokeWidth=".7" /></>, 'w-[38px]'],
      '|',
      [<><path d="M22 0V22L3 12L14 0Z" fill={P} stroke="none" /><path d="M14 0L3 12L22 22" stroke="#a86a00" strokeWidth="4.500" /><path d="M14 0L3 12L22 22" stroke="#ffd02a" strokeWidth="2.800" /></>,
        <><path d="M4 3C5 12 12 19 20 20" stroke="#6a5200" strokeWidth="7" strokeLinecap="round" /><path d="M4 3C5 12 12 19 20 20" stroke="#ffdf2e" strokeWidth="5.200" strokeLinecap="round" /><path d="M4 3C5 12 12 19 20 20" strokeWidth="1.200" /></>, 'w-[34px] ml-[8px]'],
      [<><path d="M12 3L22 21H2Z" fill="#ffdf6a" stroke="#8a5a00" strokeWidth="4" /><path d="M12 3L22 21H2Z" fill="#f7b21e" stroke="#ffcf3a" strokeWidth="2.400" /><circle cx="12" cy="15" r="3" fill="#fff" stroke="#8a5a00" /></>,
        <><path d="M6 6L18 18" stroke="#6a5200" strokeWidth="6" /><circle cx="6" cy="6" r="5.500" fill="#ffdf2e" stroke="#6a5200" /><circle cx="18" cy="18" r="5.500" fill="#ffdf2e" stroke="#6a5200" /><path d="M7 7L17 17" stroke="#ffdf2e" strokeWidth="4" /><circle cx="6" cy="6" r="1.500" fill="#111" /><circle cx="18" cy="18" r="1.500" fill="#111" /></>, 'w-[32px] mr-[4px]'],
    ],
  },
  {
    name: 'Primitive', w: 'w-[86px]',
    cols: [
      [<><path d="M2 6H22V18H2Z" fill={P} /><path d="M13 6H22V18H13Z" fill="#f9a61c" /><path d="M2 6L13 18M13 6V18M13 18L22 6" />{dot(2, 6)}{dot(13, 6)}{dot(22, 6)}{dot(2, 18)}{dot(13, 18)}{dot(22, 18)}</>,
        <><path d="M4 4H20V20H4Z" fill="#ddd" /><path d={gridIn(4, 4, 16, 4)} stroke="#999" strokeWidth=".6" /><path d="M4 4H20V9H15V16C15 19 11 19 11 16V11L8 9H4Z" fill={P} stroke="#8a2a00" /><path d="M4 4H20V20H4Z" strokeWidth="1.500" /></>, 'w-[38px]'],
      '|',
      [<><path d="M3 3H21V21H3Z" fill={R} /><path d={gridIn(3, 3, 18, 5)} stroke="#f9782a" strokeWidth=".6" /><path d="M3 3H21V21H3Z" stroke="#7a2000" strokeWidth="1.500" /></>,
        <><circle cx="12" cy="12" r="8.500" fill="#f9851c" stroke="#7a2000" strokeWidth="1.400" /><path d="M4 9H20M4 15H20M9 4V20M15 4V20" stroke="#9a3500" strokeWidth=".8" /></>, 'w-[42px]'],
    ],
  },
  {
    name: 'Triangulation', w: 'w-[133px]',
    cols: [
      [<><path d="M4 2L13 2L21 9L20 20L8 21L3 12Z" fill="#8fe873" stroke="#2e8a2a" />{dot(4, 2)}{dot(13, 2)}{dot(21, 9)}{dot(20, 20)}{dot(8, 21)}{dot(3, 12)}{dot(9, 9)}{dot(14, 13)}{dot(10, 15)}</>,
        <><path d="M13 1L22 9L18 20L7 22L2 12Z" fill="#5cc41e" stroke="#1d5a0a" /><path d="M13 1L10 11L22 9M10 11L2 12M10 11L7 22M10 11L18 20" stroke="#1d5a0a" /><path d="M13 1L10 11L2 12Z" fill="#aef06a" stroke="none" /></>, 'w-[38px]'],
      '|',
      [<><path d="M12 11L3 4L6 1L12 4Z" fill="#7fd07f" stroke="none" /><path d="M12 11L16 1L21 3L20 8Z" fill="#e8305a" stroke="none" /><path d="M12 11L22 9L18 15Z" fill="#f08aa0" stroke="none" /><path d="M12 11L14 21L9 22L5 16Z" fill="#8a9aea" stroke="none" /><path d="M12 11L3 8M12 11L22 20M12 11L14 0M12 11L5 19M12 11L22 7" stroke="#444" />{[[5, 3, '#2e8a2a'], [21, 4, '#a01030'], [9, 21, '#3040a0']].map(([x, y, f]) => <circle key={String(f)} cx={x} cy={y} r="1.600" fill={String(f)} stroke="none" />)}</>,
        <><rect x="-1" y="-1" width="26" height="26" fill="#2b57c2" stroke="#1a3a8a" />{[[3, 3, 3], [10, 2.500, 2.200], [17, 3, 3.200], [22.500, 8, 2], [4, 10.500, 3.200], [11.500, 9.500, 3], [18.500, 12, 3], [3.500, 19, 3.800], [11.500, 17, 3.600], [19.500, 19.500, 4]].map(([x, y, r]) => <circle key={x + y * 40} cx={x} cy={y} r={r} fill="#8fb4ff" stroke="#1c3f9a" strokeWidth=".6" />)}</>, 'w-[46px] ml-[3px]'],
      '|',
      [<><path d="M7 7L17 17" stroke="#1d6a0a" strokeWidth="6.500" /><circle cx="6.500" cy="6.500" r="5.500" fill="#6ee02a" stroke="#1d6a0a" /><circle cx="17.500" cy="17.500" r="5.500" fill="#6ee02a" stroke="#1d6a0a" /><path d="M8 8L16 16" stroke="#6ee02a" strokeWidth="4.200" /><path d="M4.500 6.500H8.500M6.500 4.500V8.500M15.500 17.500H19.500M17.500 15.500V19.500" />{dot(13, 5)}</>,
        <><path d="M8 6L18 16" stroke="#c23a00" strokeWidth="6.500" /><circle cx="7.500" cy="6.500" r="5.500" fill="#ffb52a" stroke="#c23a00" strokeWidth="1.500" /><circle cx="18" cy="17" r="5.500" fill="#ffb52a" stroke="#c23a00" strokeWidth="1.500" /><path d="M9 8L17 16" stroke="#ffb52a" strokeWidth="4" /><path d="M5.500 6.500H9.500M7.500 4.500V8.500M16 17H20M18 15V19" />{num(-1, 23, '1.0', 9)}</>, 'w-[40px]'],
    ],
  },
  {
    name: 'Util', w: 'w-[169px]',
    cols: [
      [<><path d="M3 1H22V13H14V22H3Z" fill={R} /><path d="M8 1V22M14 1V13M18 1V13M3 6H22M3 10H22M3 14H14M3 18H14" stroke="#f9782a" strokeWidth=".6" /><path d="M3 1H22V13H14V22H3Z" stroke="#7a2000" strokeWidth="1.400" /></>,
        <><path d="M3 7L9 5L11 10L6 14L2 12Z" fill="#f9951a" stroke="#8a3a00" /><circle cx="17" cy="17" r="5" fill="#f9951a" stroke="#8a3a00" /><path d="M5 15L9 22H2Z" fill="#f9951a" stroke="#8a3a00" />{hand}</>, 'w-[33px] ml-[2px]'],
      [<><circle cx="11" cy="13" r="9" fill="#f9951a" stroke="#8a3a00" strokeWidth="1.500" /><ellipse cx="8" cy="9" rx="4" ry="3" fill="#fff" fillOpacity=".5" stroke="none" />{hand}</>,
        <><path d="M5 5L15 4L20 12L16 20L8 22L2 15Z" fill="#f9951a" stroke="#8a3a00" strokeWidth="1.500" /><ellipse cx="8" cy="10" rx="4" ry="3" fill="#fff" fillOpacity=".4" stroke="none" />{hand}</>, 'w-[36px] pl-[3px]'],
      '|',
      [<><path d="M12 3H20V11H12ZM3 8H11V15H3ZM11 14H19V21H11Z" fill="#f98a1c" stroke="#8a3000" strokeWidth="1.400" /><path d="M7 1L9 5M3 20L7 17M21 15L24 18M2 3L5 6" stroke="#777" strokeWidth="1.500" /></>,
        <><path d="M1 7H11V17H1ZM13 7H23V17H13Z" fill="#e0400c" stroke="#7a2000" strokeWidth="1.400" /><path d="M4.500 7V17M8 7V17M16.500 7V17M20 7V17M1 12H23" stroke="#f99a2a" strokeWidth=".7" /><path d="M8 1L10 5M12 0V5M16 1L14 5M8 23L10 19M12 24V19M16 23L14 19" stroke="#777" /></>, 'w-[47px]'],
      '|',
      [<><path d="M2 3H9L7.500 6L13 13L10 15L4.500 8L2 10ZM12 3H19L17.500 6L22 12L18 14L14 8L12 10Z" fill="#f9951a" stroke="#8a3a00" /><path d="M7 17L10 14H23L21 22H7Z" fill="#bbb" stroke="#444" /></>,
        <><path d="M3 5L8 3V18L3 21Z" fill="#bbb" stroke="#444" strokeWidth="1.400" /><path d="M9 7L18 13L20 11L21 19L13 18L15 16L9 11Z" fill="#e02a2a" stroke="#8a1010" /></>, 'w-[44px]'],
    ],
  },
];

/* ---------- Rhino chrome ---------- */

const menus: [string, string][] = [
  ['File', 'w-[39px]'], ['Edit', 'w-[42px]'], ['View', 'w-[49px]'], ['Curve', 'w-[56px]'], ['Surface', 'w-[68px]'],
  ['Solid', 'w-[51px]'], ['Mesh', 'w-[54px]'], ['Dimension', 'w-[91px]'], ['Transform', 'w-[88px]'], ['Tools', 'w-[54px]'],
  ['Analyze', 'w-[70px]'], ['Render', 'w-[67px]'], ['Panels', 'w-[60px]'], ['Paneling Tools', 'w-[120px]'], ['V-Ray', 'w-[56px]'], ['Help', 'w-[50px]'],
];

const tabs: [string, string][] = [
  ['Standard', 'w-[95px]'], ['CPlanes', 'w-[87px]'], ['Set View', 'w-[93px]'], ['Display', 'w-[82px]'], ['Select', 'w-[74px]'],
  ['Viewport Layout', 'w-[151px]'], ['Visibility', 'w-[90px]'], ['Transform', 'w-[106px]'], ['Curve T', 'w-[80px]'],
];

function Tab({ label, w, active }: { label: string; w: string; active?: boolean }) {
  return (
    <div className={`${w} h-full shrink-0 bg-[#b4bfce] pt-px pl-px [clip-path:polygon(10px_0,100%_0,100%_100%,0_100%)]`}>
      <div className={`${active ? 'bg-[#eceef2]' : 'bg-[#d9d9d9] mb-px'} flex h-full items-center ${label === 'Curve T' ? 'pl-[12px]' : 'justify-center pr-[2px]'} pt-px [clip-path:polygon(9px_0,100%_0,100%_100%,0_100%)]`}>
        <span className="whitespace-nowrap leading-none">{label}</span>
      </div>
    </div>
  );
}

function BottomTab({ label, w, active }: { label: React.ReactNode; w: string; active?: boolean }) {
  return (
    <div className={`${w} h-full shrink-0 bg-[#bcc5d2] pb-px pl-px [clip-path:polygon(0_0,100%_0,100%_100%,12px_100%,0_50%)]`}>
      <div className={`${active ? 'bg-[#f0f2f6]' : 'bg-[#d9d9d9]'} mr-px flex h-full items-center justify-center pl-2 pt-[5px] [clip-path:polygon(0_0,100%_0,100%_100%,11px_100%,0_50%)]`}>
        {label}
      </div>
    </div>
  );
}

function Gear({ dark }: { dark?: boolean }) {
  const c = dark ? '#a0a0a0' : '#8a8a8a';
  return (
    <svg width={dark ? 18 : 15} height={dark ? 18 : 15} viewBox="0 0 16 16" fill="none" className="block">
      <circle cx="8" cy="8" r="6.200" stroke={c} strokeWidth={dark ? 3.4 : 2} strokeDasharray="2.700 2.170" />
      <circle cx="8" cy="8" r="4.800" stroke={c} strokeWidth={dark ? 3 : 1.2} fill="#eceef2" />
      <circle cx="8" cy="8" r="1.400" stroke={c} />
    </svg>
  );
}

function ToolRow({ h, gear, children }: { h: string; gear?: boolean; children: React.ReactNode }) {
  return (
    <div className={`${h} relative shrink-0 border-t border-[#c6cdd8] bg-[#e9ebef]`}>
      <div className="absolute bottom-1 left-1 top-1 w-[3px] border-x border-[#cdd3dc]" />
      {children}
      {gear && <div className="absolute right-[2px] top-2"><Gear /></div>}
    </div>
  );
}

const Sep = () => <div className="mx-[2.500px] h-6 w-px shrink-0 bg-[#b9b9b9]" />;

const snaps: [string, string, number][] = [
  ['End', 'w-[55px]', 1], ['Near', 'w-[63px]', 1], ['Point', 'w-[66px]', 1], ['Mid', 'w-[57px]', 1], ['Cen', 'w-[56px]', 0],
  ['Int', 'w-[47px]', 1], ['Perp', 'w-[62px]', 1], ['Tan', 'w-[54px]', 1], ['Quad', 'w-[67px]', 1], ['Knot', 'w-[63px]', 0],
  ['Vertex', 'w-[77px]', 1], ['Project', 'w-[91px]', 2], ['Disable', 'w-[90px]', 2],
];

const status: [React.ReactNode, string][] = [
  ['CPlane', 'w-[64px] pl-[7px]'], ['x 134.304', 'w-[108px] justify-center'], ['y 24.373', 'w-[108px] justify-center'], ['z 0.000', 'w-[108px] justify-center'],
  ['Millimeters', 'w-[108px] justify-center'],
  [<><span className="mr-[4px] h-[14px] w-[14px] bg-black" />Default</>, 'w-[208px] pl-1'],
  ['Grid Snap', 'w-[88px] justify-center'], ['Ortho', 'w-[58px] justify-center'], ['Planar', 'w-[60px] justify-center'],
  [<b>Osnap</b>, 'w-[62px] justify-center bg-[#dcebf7]'], ['SmartTrack', 'w-[98px] justify-center'],
  [<b>Gumball</b>, 'w-[76px] justify-center bg-[#dcebf7]'], ['Record History', 'w-[126px] justify-center text-[15.500px] pr-px'], ['Filter', 'w-[50px] justify-center'],
  ['Memory use: 494 MB', 'flex-1 pl-1 text-[15.300px]'],
];

function RightStrip() {
  const btn = 'border border-[#b0b0b0] bg-[#e1e1e1]';
  return (
    <div className="flex w-[56px] shrink-0 flex-col bg-[#e9ebef]">
      <div className="flex h-[33px] items-center justify-end border-b border-[#c6cdd8] pr-[3px] pt-3"><Gear dark /></div>
      <div className="flex flex-1">
        <div className="flex w-[48px] flex-col border-r border-[#d0d4dc] bg-white">
          <div className="h-[41px] bg-[#f7f8fa]" />
          <div className="h-[31px] border-y border-[#dfe2e8] bg-[#f4f5f8]" />
          <div className="h-[26px] bg-white" />
          <div className="h-[53px] bg-[#e9ebef]" />
          <div className="flex h-[25px] items-center justify-end border-t border-[#a8a8a8] bg-[#dcdcdc] pr-2">
            <svg width="11" height="7" viewBox="0 0 11 7" fill="none" stroke="#444"><path d="M.5.500L5.500 5.500L10.500.500" /></svg>
          </div>
          <div className="h-[33px] bg-[#f5f6f8]" />
          <div className="h-[26px] border-t border-[#e2e4e8]" />
          <div className="h-[26px] border-t border-[#e2e4e8]" />
          <div className="h-[26px] border-t border-[#e2e4e8]" />
          <div className="h-[26px] border-t border-[#e2e4e8]" />
          <div className="h-[25px] border-t border-[#e2e4e8]" />
          <div className="h-[28px] bg-[#e9ebef]" />
          <div className={`h-[23px] ${btn}`} />
          <div className="h-[33px] bg-[#f5f6f8]" />
          <div className="h-[26px] border-t border-[#e2e4e8]" />
          <div className="h-[26px] border-t border-[#e2e4e8]" />
          <div className="h-[28px] border-t border-[#e2e4e8]" />
          <div className={`h-[24px] ${btn}`} />
          <div className="h-[33px]" />
          <div className={`flex h-[25px] items-center justify-end pr-1 pt-0.5 text-[15px] font-bold ${btn}`}>...</div>
          <div className="flex-1 border-b border-[#b4bfce]" />
        </div>
        <div className="flex-1 border-r-2 border-[#cfd5ee] bg-[#f1f3f7]" />
      </div>
    </div>
  );
}

/* ---------- Grasshopper canvas ---------- */

function Grip({ at }: { at: string }) {
  return <span className={`absolute h-[10px] w-[10px] rounded-full border-2 border-black bg-white ${at}`} />;
}

const silver = 'bg-linear-to-b from-[#f4f4f4] via-[#e2e2e2] to-[#cfcfcf]';

function Ticks() {
  return (
    <div className="flex h-[5px] w-full justify-between border-b border-[#c8c8c8]">
      {Array.from({ length: 11 }, (_, i) => (
        <i key={i} className={`w-px bg-[#b8b8b8] ${i % 2 ? 'mt-0.5 h-[3px]' : 'h-[5px]'}`} />
      ))}
    </div>
  );
}

function Slider({ at, label, lw, knob, value, diamond, track }: { at: string; label: string; lw: string; knob: string; value: string; diamond?: boolean; track: string }) {
  return (
    <div className={`absolute h-[22px] ${at}`}>
      <Grip at="-right-[6px] top-[6px]" />
      <div className={`relative flex h-full overflow-hidden rounded-[4px] border border-[#333] shadow-[1px_2px_3px_rgba(0,0,0,.35)] ${silver}`}>
        <div className={`${lw} flex shrink-0 items-center justify-center border-r border-[#333] bg-linear-to-b from-[#cfcfe0] via-[#a9a8bd] to-[#9896ac]`}>{label}</div>
        <div className={`flex-1 pt-[6px] ${track}`}><Ticks /></div>
        <div className={`absolute top-0 flex h-full items-center gap-[3px] ${knob}`}>
          {diamond ? (
            <><span className="mr-[3px]">{value}</span><span className="h-[6px] w-[6px] rotate-45 border-[1.500px] border-black bg-white" /></>
          ) : (
            <><span className="h-[9px] w-[9px] rounded-full border-[2.500px] border-black bg-white" /><span className="bg-[#e2e2e2]">{value}</span></>
          )}
        </div>
      </div>
    </div>
  );
}

function Core({ at, children }: { at: string; children: React.ReactNode }) {
  return (
    <div className={`absolute flex items-center justify-center rounded-[3px] border border-black bg-linear-to-b from-[#9a9a9a] from-[2%] via-[#4c4c4c] via-[8%] to-[#2e2e2e] ${at}`}>
      <span className="rotate-180 whitespace-nowrap text-[14.600px] font-bold leading-none text-white [writing-mode:vertical-rl]">{children}</span>
    </div>
  );
}

function Wire({ d, double }: { d: string; double?: boolean }) {
  return (
    <>
      <path d={d} fill="none" stroke="#3d3934" strokeOpacity=".8" strokeWidth={double ? 4.8 : 2.8} />
      {double && <path d={d} fill="none" stroke="#cfcbc3" strokeWidth="1.200" />}
    </>
  );
}

function Canvas() {
  const grid =
    [1127, 1287, 1446.5, 1606, 1766].map((x) => `M${x} 330V976`).join('') +
    Array.from({ length: 12 }, (_, i) => `M857 ${373.5 + i * 53.1}H1889`).join('');
  const side: [string, string, string][] = [
    ['0', '43.68', 'left-[210px] top-[104px]'],
    ['1', '76.27', 'left-[256px] top-[121px]'],
    ['2', '79.89', 'left-[260px] top-[138px]'],
    ['3', '69.84', 'left-[246px] top-[155px]'],
  ];
  return (
    <div className="relative flex-1 overflow-hidden bg-[#d4d0c8] text-[11.500px] leading-none tracking-[0.3px] text-[#1a1a1a]">
      <svg className="absolute left-0 top-0" width="1031" height="646" viewBox="857 330 1031 646">
        <defs>
          <pattern id="hatch" width="4" height="4" patternUnits="userSpaceOnUse">
            <path d="M0 4L4 0" stroke="#bdb9b1" strokeWidth=".9" />
          </pattern>
          <linearGradient id="edge">
            <stop offset=".75" stopColor="#000" stopOpacity="0" />
            <stop offset=".88" stopColor="#000" stopOpacity=".15" />
            <stop offset="1" stopColor="#000" stopOpacity=".5" />
          </linearGradient>
          <linearGradient id="top" x2="0" y2="1">
            <stop offset="0" stopColor="#000" stopOpacity=".07" />
            <stop offset="1" stopColor="#000" stopOpacity="0" />
          </linearGradient>
        </defs>
        <rect x="857" y="330" width="111" height="646" fill="#d0cdc5" />
        <rect x="857" y="330" width="111" height="646" fill="url(#hatch)" />
        <rect x="857" y="330" width="111" height="646" fill="url(#edge)" />
        <path d="M967.500 330V976" stroke="#000" />
        <rect x="857" y="330" width="1031" height="14" fill="url(#top)" />
        <path d={grid} stroke="#000" strokeOpacity=".14" />
        <Wire double d="M1066 402H1282" />
        <Wire double d="M1216 469C1248 469 1248 438 1282 438" />
        <Wire d="M1234 532C1274 532 1244 473.500 1282 473.500" />
        <Wire double d="M1364 438C1536 438 1536 471.500 1710 471.500" />
        <Wire d="M1570 509.500C1640 509.500 1640 493 1710 493" />
        <Wire d="M1634 557.500C1672 557.500 1672 514 1710 514" />
        <Wire d="M1542 601C1626 601 1626 535.500 1710 535.500" />
        <Wire d="M1440 854C1705 854 1445 471.500 1710 471.500" />
        <Wire double d="M1270 817.500H1354" />
        <Wire d="M1235 851.500C1295 851.500 1295 854 1354 854" />
        <Wire d="M1288 894.500C1320 894.500 1320 890 1354 890" />
        <path d="M1819 916L1829 917L1828 925L1822 924Z" fill="#000" />
        <circle cx="1835" cy="922" r="5" fill="#000" />
        <circle cx="1829" cy="929" r="3.500" fill="#000" />
        <ellipse cx="1827" cy="936" rx="3.500" ry="6" fill="#000" />
        <circle cx="1845" cy="915.500" r="3.500" fill="#000" />
        <radialGradient id="cmp">
          <stop offset=".2" stopColor="#efefef" />
          <stop offset="1" stopColor="#9c9c9c" />
        </radialGradient>
        <circle cx="1851.500" cy="939.500" r="24" fill="url(#cmp)" stroke="#222" strokeWidth="3.600" />
        <circle cx="1851.500" cy="939.500" r="23.700" fill="none" stroke="#fff" strokeWidth="1.800" />
        <path d="M1861 918L1870 922L1862 926ZM1873 952L1865 949L1870 957ZM1835 955L1843 953L1841 961ZM1833 922L1838 929L1829 930Z" fill="#fff" />
      </svg>

      <div className="absolute left-[151px] top-[61px] h-[22px] w-[54px]">
        <Grip at="-left-[6px] top-[6px]" /><Grip at="-right-[6px] top-[6px]" />
        <div className={`relative flex h-full items-center justify-center rounded-[4px] border border-[#333] shadow-[1px_2px_3px_rgba(0,0,0,.35)] ${silver}`}>P</div>
      </div>

      <div className="absolute left-[138px] top-[97px] h-[85px] w-[217px]">
        <Grip at="-right-[6px] top-[37px]" />
        <svg className="absolute left-0 top-0 overflow-visible" width="217" height="84" viewBox="0 0 217 84">
          <defs>
            <linearGradient id="pk" x2="0" y2="1">
              <stop offset="0" stopColor="#ff9fce" /><stop offset=".08" stopColor="#ff6ab4" /><stop offset=".1" stopColor="#fb1e96" /><stop offset="1" stopColor="#fa0a8c" />
            </linearGradient>
          </defs>
          <path d="M4 1H214Q217 1 217 4V81Q217 84 214 84H2L5 78L1 73L6 68L1 63L6 58L1 53L6 48L1 43L6 38L1 33L6 28L1 23L6 18L1 13L5 8L1 4Z" fill="url(#pk)" stroke="#8a0a50" />
        </svg>
        <div className="absolute left-[11px] top-[7px] h-[71px] w-[201px] border border-[#222] bg-linear-to-b from-[#b4b4b4] from-0% via-[#d4d4d4] via-15% to-[#cacaca]">
          <div className="absolute right-px top-px h-[67px] w-[7px] rounded-full bg-[#666]" />
        </div>
      </div>
      {side.map(([n, v, at], i) => (
        <React.Fragment key={n}>
          <div className={`absolute left-[156px] text-[10px] text-[#555] ${['top-[106px]', 'top-[123px]', 'top-[140px]', 'top-[157px]'][i]}`}>{n}</div>
          <div className={`absolute left-[190px] h-px w-[132px] bg-[#c4c4c4] ${['top-[113px]', 'top-[130px]', 'top-[147px]', 'top-[164px]'][i]}`} />
          <div className={`absolute flex h-[18px] w-[50px] items-center justify-center border border-[#333] bg-white pb-[3px] font-["Liberation_Mono"] text-[10px] tracking-[0.9px] ${at}`}>{v}</div>
        </React.Fragment>
      ))}

      <div className="absolute left-[427px] top-[53px] h-[111px] w-[77px]">
        <Grip at="-left-[6px] top-[14px]" /><Grip at="-left-[6px] top-[50px]" /><Grip at="-left-[6px] top-[86px]" /><Grip at="-right-[6px] top-[50px]" />
        <div className={`relative h-full rounded-[4px] border border-[#333] shadow-[2px_3px_4px_rgba(0,0,0,.35)] ${silver}`}>
          <span className="absolute left-[7px] top-[13px]">P</span><span className="absolute left-[7px] top-[48px]">R</span><span className="absolute left-[7px] top-[84px]">S</span>
          <Core at="left-[18px] top-px h-[107px] w-[27px]">Point Charge</Core>
          <span className="absolute left-[49px] top-[49px]">PC</span>
        </div>
      </div>

      <Slider at="left-[140px] top-[191px] w-[234px]" label="Charge Strength" lw="w-[106px]" knob="right-[5px] flex-row-reverse" value="1.000" track="pl-[9px] pr-[55px]" />
      <Slider at="left-[536px] top-[168px] w-[175px]" label="Iso" lw="w-[30px]" knob="left-[66px]" value="0.25" track="px-[10px]" />
      <Slider at="left-[586px] top-[216px] w-[190px]" label="Cell Size" lw="w-[61px]" knob="left-[81px]" value="15.68" track="px-[10px]" />
      <Slider at="left-[196px] top-[511px] w-[180px]" label="Radius" lw="w-[52px]" knob="left-[81px]" value="22.3" track="px-[10px]" />
      <Slider at="left-[189px] top-[553px] w-[240px]" label="Charge Strengths" lw="w-[112px]" knob="right-[7px]" value="1" diamond track="pl-[10px] pr-[30px]" />

      <div className="absolute left-[568px] top-[259px] h-[24px] w-[115px]">
        <Grip at="-right-[6px] top-[7px]" />
        <div className="relative flex h-full items-center rounded-[4px] border border-[#333] bg-linear-to-b from-[#cfcfe0] via-[#a9a8bd] to-[#9896ac] shadow-[1px_2px_3px_rgba(0,0,0,.35)]">
          <span className="flex-1 pr-1 text-center">Toggle</span>
          <span className="mr-[2px] flex h-[20px] w-[49px] items-center justify-center border border-black bg-linear-to-b from-[#666] to-[#3a3a3a] font-['Liberation_Mono'] text-[12.500px] tracking-[0.9px] text-[#ddd] outline outline-[#777]">True</span>
        </div>
      </div>

      <div className="absolute left-[856px] top-[128px] h-[90px] w-[82px]">
        <Grip at="-left-[6px] top-[8px]" /><Grip at="-left-[6px] top-[30px]" /><Grip at="-left-[6px] top-[51px]" /><Grip at="-left-[6px] top-[72px]" />
        <Grip at="-right-[6px] top-[19px]" /><Grip at="-right-[6px] top-[62px]" />
        <div className={`relative h-full rounded-[4px] border border-[#333] shadow-[2px_3px_4px_rgba(0,0,0,.35)] ${silver}`}>
          <span className="absolute right-[59px] top-[6px]">C</span><span className="absolute right-[59px] top-[27px]">I</span>
          <span className="absolute right-[59px] top-[49px]">CS</span><span className="absolute right-[59px] top-[70px]">E</span>
          <Core at="left-[26px] top-px h-[86px] w-[27px]">Cocoon</Core>
          <span className="absolute left-[57px] top-[17px]">M</span><span className="absolute left-[57px] top-[60px]">R</span>
        </div>
      </div>

      <div className="absolute left-[357px] top-[477px] h-[22px] w-[54px]">
        <Grip at="-left-[6px] top-[6px]" /><Grip at="-right-[6px] top-[6px]" />
        <div className="relative flex h-full items-center justify-center rounded-[3px] border border-[#7a2a1a] bg-linear-to-b from-[#ffc888] via-[#ff9a34] to-[#ff8a10] pr-px shadow-[1px_2px_3px_rgba(0,0,0,.35)]">C</div>
        <svg className="absolute -top-[19px] left-[33px]" width="19" height="20" viewBox="0 0 19 20"><defs><linearGradient id="by" x2="0" y2="1"><stop offset="0" stopColor="#fbe6a0" /><stop offset=".5" stopColor="#f4bd30" /><stop offset="1" stopColor="#eda500" /></linearGradient></defs><path d="M2 1H16Q18 1 18 3V13Q18 15 16 15H12L9.500 18L7 15H2.500Q1 15 1 13V3Q1 1 2.500 1Z" fill="url(#by)" stroke="#b08a20" /></svg>
      </div>

      <div className="absolute left-[500px] top-[467px] h-[115px] w-[79px]">
        <Grip at="-left-[6px] top-[15px]" /><Grip at="-left-[6px] top-[52px]" /><Grip at="-left-[6px] top-[88px]" /><Grip at="-right-[6px] top-[52px]" />
        <div className="relative h-full rounded-[4px] border border-[#5a0a0a] bg-linear-to-b from-[#f58080] from-0% via-[#e01818] via-8% to-[#cc0000] text-[#4a0505] shadow-[2px_3px_4px_rgba(0,0,0,.35)]">
          <span className="absolute left-[7px] top-[14px]">C</span><span className="absolute left-[7px] top-[50px]">R</span><span className="absolute left-[7px] top-[87px]">S</span>
          <Core at="left-[20px] top-px h-[110px] w-[27px]">Curve Charge</Core>
          <span className="absolute left-[50px] top-[51px]">CC</span>
        </div>
        <svg className="absolute -top-[18px] left-[58px]" width="19" height="20" viewBox="0 0 19 20"><defs><linearGradient id="br" x2="0" y2="1"><stop offset="0" stopColor="#ffb090" /><stop offset=".5" stopColor="#ff4a20" /><stop offset="1" stopColor="#f52a00" /></linearGradient></defs><path d="M2 1H16Q18 1 18 3V13Q18 15 16 15H12L9.500 18L7 15H2.500Q1 15 1 13V3Q1 1 2.500 1Z" fill="url(#br)" stroke="#a02a10" /></svg>
      </div>

      <div className="absolute bottom-0 left-0 flex h-[35px] w-[184px] items-center border border-black bg-linear-to-b from-[#e0e0e0] via-[#b8b8b8] to-[#9c9c9c]">
        {[
          <><rect x="1" y="1" width="22" height="22" rx="2" fill="#aaa" stroke="#eee" /><path d="M12 5V14M9 11L12 15L15 11M4 18H20M5 18V21M8 18V21M11 18V21M14 18V21M17 18V21" strokeWidth="1.600" /></>,
          <><rect x="1" y="1" width="22" height="22" rx="2" fill="#aaa" stroke="#eee" /><rect x="7" y="3" width="10" height="18" fill="#222" /><rect x="9" y="5" width="6" height="6" fill="#eee" /></>,
          <><circle cx="5" cy="5" r="3.500" fill="#fff" /><path d="M3 12C11 9 14 14 18 19" strokeWidth="4" /><path d="M21 14V22H13Z" fill="#111" /><path d="M9 10L16 6" stroke="#b01020" strokeWidth="4" /><path d="M12 2H20V10Z" fill="#b01020" stroke="none" /></>,
          <><rect x="1" y="1" width="22" height="22" rx="2" fill="#ffc92e" stroke="#fff3b0" /><path d="M3 19L7 12L7 18L12 8L12 17L18 6L16 17L20 12" stroke="#a05a00" strokeWidth="2.400" /></>,
          <><path d="M5 21C14 20 10 14 12 9C13 5 16 5 20 3" stroke="#c01818" strokeWidth="1.600" /><path d="M5 21C14 20 10 14 12 9C13 5 16 5 20 3" strokeDasharray="3 3" />{dot(5, 21)}{dot(11, 16)}{dot(13, 8)}{dot(20, 3)}</>,
        ].map((c, i) => <div key={i} className="flex w-[35px] justify-center pr-[3px]"><Ic>{c}</Ic></div>)}
        <div className="ml-auto h-full w-[7px] bg-[#777]" />
      </div>
    </div>
  );
}

const ghTabs: [string, string][] = [
  ['Params', 'w-[68px]'], ['Maths', 'w-[59px]'], ['Sets', 'w-[50px]'], ['Vector', 'w-[67px]'], ['Curve', 'w-[60px]'], ['Surface', 'w-[65px]'],
  ['Mesh', 'w-[51px]'], ['Intersect', 'w-[90px] pl-[10px] box-content'], ['Trns', 'w-[50px]'], ['Dis', 'w-[45px]'], ['Wb', 'w-[34px]'],
  ['PanelingTools', 'w-[122px]'], ['Kangaroo2', 'w-[90px]'], ['Kangaroo', 'w-[83px]'], ['V-Ray', 'w-[60px]'],
];

const cyl = (f: string, s: string, hole = '#fff') => (
  <g transform="rotate(40 12 12)">
    <path d="M5 5V19C5 22.500 19 22.500 19 19V5" fill={f} stroke={s} />
    <path d="M7 8V20" stroke="#fff" strokeOpacity=".5" strokeWidth="2" />
    <ellipse cx="12" cy="5" rx="7" ry="3.600" fill={f} stroke={s} />
    <ellipse cx="12" cy="5" rx="3.600" ry="1.900" fill={hole} stroke={s} />
  </g>
);

function Grasshopper() {
  return (
    <div className="absolute left-[854px] top-[84px] flex h-[920px] w-[1037px] flex-col border border-[#8e8e8e] bg-[#f0f0f0] shadow-[2px_3px_12px_rgba(0,0,0,.45)]">
      <div className="flex h-[36px] shrink-0 items-center bg-white pl-[9px] text-[15px] text-[#999]">
        <span className="tracking-[0.2px]">Grasshopper - unnamed</span>
        <svg className="ml-auto mr-[23px] block" width="130" height="14" viewBox="0 0 130 14" fill="none" stroke="#888">
          <path d="M0 6.500H12M58.500 1.500H69.500V12.500H58.500ZM118 1L129 12M129 1L118 12" />
        </svg>
      </div>
      <div className="flex h-[35px] shrink-0 items-center bg-linear-to-r from-[#f2f2f2] to-[#fdfdfd] pl-[15px] pr-[11px] pt-px text-[15px] text-black">
        <span className="w-[46px]">File</span><span className="w-[50px]">Edit</span><span className="w-[56px]">View</span>
        <span className="w-[73px]">Display</span><span className="w-[82px]">Solution</span><span>Help</span>
        <span className="ml-auto">unnamed</span>
      </div>
      <div className="flex h-[28px] shrink-0 items-center pl-[9px] font-['Liberation_Mono'] text-[13.330px] text-[#707070]">
        {ghTabs.map(([t, w]) =>
          t === 'Mesh' ? (
            <span key={t} className="z-10 -mb-px flex h-[29px] w-[51px] items-center justify-center rounded-t-[8px] border border-b-0 border-[#9a9a9a] bg-white pb-[3px] text-black">Mesh</span>
          ) : (
            <span key={t} className={`shrink-0 pt-[3px] ${w}`}>{t}</span>
          )
        )}
      </div>
      <div className="flex h-[107px] shrink-0 rounded-t-[6px] border border-b-0 border-[#9c9c9c] bg-linear-to-b from-[#d6d6d6] to-[#f0f0f0] pl-[3px] pt-[2px]">
        {ribbon.map((g) => (
          <div key={g.name} className={`${g.w} mr-[5px] flex h-[91px] shrink-0 flex-col overflow-hidden rounded-[5px] border border-[#7c7c7c] bg-linear-to-b from-[#e2e2e2] to-[#d4d4d4] shadow-[inset_0_1px_0_#f6f6f6]`}>
            <div className="flex h-[72px]">
              {g.cols.map((c, i) =>
                c === '|' ? (
                  <div key={i} className="my-3 ml-auto w-px bg-[#b4b4b4]" />
                ) : (
                  <div key={i} className={`flex flex-col items-center gap-[8px] pt-[5px] ${c[2]}`}>
                    <Ic size={27}>{c[0]}</Ic>
                    <Ic size={27}>{c[1]}</Ic>
                  </div>
                )
              )}
            </div>
            <div className="relative flex h-[17px] shrink-0 justify-center bg-linear-to-b from-[#2e2e2e] to-[#161616] pr-3 pt-px font-['Liberation_Mono'] text-[10px] leading-[12px] text-white">
              {g.name}
              <svg className="absolute right-[3px] top-1" width="9" height="9" viewBox="0 0 9 9" stroke="#999" strokeWidth="1.300" fill="#999"><path d="M4.500 0V7M1.500 4L4.500 7.500L7.500 4Z" /></svg>
            </div>
          </div>
        ))}
      </div>
      <div className="ml-px flex h-[39px] shrink-0 items-center border-t-2 border-[#6e6e6e] bg-linear-to-b from-white to-[#efefef] pb-px pl-[5px]">
        <Ic size={26}><path d="M3 10L5 2L14 1L20 8V14H3Z" fill="#f4f4f4" stroke="#888" /><path d="M2 12L8 11L9 9H22L21 22H2Z" fill="#4fb84a" stroke="#1f7a22" /><path d="M4 13H20V15H4Z" fill="#a6e29a" stroke="none" /></Ic>
        <div className="w-[9px]" />
        <Ic size={29}><path d="M1 2H20L23 5V23H1Z" fill="#1f6de0" stroke="#0e3f9a" /><rect x="5" y="2.500" width="14" height="8" fill="#eef2fa" stroke="none" /><rect x="6" y="15" width="12" height="8" fill="#cfd8e6" stroke="#345" /><rect x="8" y="17" width="4" height="5" fill="#1f4f9a" stroke="none" /></Ic>
        <div className="mx-[5px] h-6 w-px bg-[#c0c0c0]" />
        <div className="flex h-[28px] w-[180px] items-center justify-between border border-[#777] bg-white pl-[4px] pr-1 text-[15px] text-[#222]">
          106%
          <svg width="10" height="6" viewBox="0 0 10 6" fill="none" stroke="#555"><path d="M.5.500L5 5L9.500.500" /></svg>
        </div>
        <div className="w-[7px]" />
        <Ic size={29}><path d="M2.500 8V2.500H9M15 2.500H21.500V8M21.500 16V21.500H15M9 21.500H2.500V16" strokeWidth="4.200" strokeLinejoin="miter" /><path d="M9.500 9.500L14.500 14.500M14.500 9.500L9.500 14.500" strokeWidth="2.400" /></Ic>
        <span className="ml-[8px] border-x-[3px] border-t-[3px] border-transparent border-t-black" />
        <div className="w-[8px]" />
        <Ic size={28}><path d="M0 12C5 4 19 4 24 12C19 20 5 20 0 12Z" fill="#eaf4fa" stroke="#555" strokeWidth="1.300" /><path d="M1 11C6 4 18 4 23 11" strokeWidth="1.800" stroke="#444" /><circle cx="12" cy="12" r="6" fill="#3b9ad6" stroke="#1a4f8a" /><circle cx="12" cy="12" r="2.600" fill="#041024" stroke="none" /></Ic>
        <span className="ml-[9px] border-x-[3px] border-t-[3px] border-transparent border-t-black" />
        <div className="w-[6px]" />
        <Ic size={28}><path d="M1 8C7 7 5 11 4 15C2 21 6 23 12 20" strokeWidth="2" stroke="#401a10" /><path d="M12 12L20 2C22 2 24 4 24 6L17 17Z" fill="#e83a3a" stroke="none" /><path d="M12 12L17 17L9 21Z" fill="#e8b070" stroke="#803010" /><path d="M14 13L21 4" stroke="#f8a0a0" strokeWidth="1.500" /></Ic>
        <div className="ml-auto flex items-center">
          <Ic size={30}><path d="M5 5L9 2H16L19 5L17 12H8Z" fill="#e2e2e2" stroke="#888" /><ellipse cx="14" cy="5" rx="4" ry="2.500" fill="#fff" stroke="#999" /><path d="M3 16C8 12 17 12 22 16C19 23 6 23 3 16Z" fill="#333" stroke="#999" /></Ic>
          <div className="w-[5px]" />
          <Ic size={29}>{cyl('#f4f4f4', '#444')}<ellipse cx="7" cy="16" rx="3.500" ry="4.500" stroke="#555" transform="rotate(-40 7 16)" /></Ic>
          <div className="w-[3px]" />
          <div className="flex h-[36px] w-[34px] items-center justify-center border border-[#2a7ab0] bg-[#e6eef6]"><Ic size={29}>{cyl('#cc1c1c', '#7a0808', '#7a0c0c')}</Ic></div>
          <div className="ml-[9px] mr-[10px] h-7 w-px bg-[#c0c0c0]" />
          <Ic size={29}>{cyl('#4fae1e', '#2a6a0a', '#2f7a10')}<path d="M3 7L18 21C14 24 10 23 7 21C2 17 0 12 3 7Z" fill="#cfcfcf" stroke="#666" /><path d="M1 4L21 23" strokeWidth="1.600" /></Ic>
          <div className="w-[6px]" />
          <Ic size={27}><circle cx="12" cy="12" r="10.500" fill="#dcdcdc" stroke="#777" /><path d="M12 1.500A10.500 10.500 0 0 0 12 22.500Z" fill="#f08a28" stroke="none" /><path d="M12 2V22" stroke="#a03010" /></Ic>
          <div className="mx-[6px] h-7 w-px bg-[#c0c0c0]" />
          <Ic size={26}><path d="M6 3L14 1L21 6L23 14L18 21L9 22L2 17L2 8Z" fill="#5ca2e8" stroke="#1f4f8a" strokeWidth="1.500" /><path d="M6 5L14 3L18 8L6 12Z" fill="#a6d0fa" stroke="none" /></Ic>
          <span className="ml-[5px] mr-[5px] border-x-[3px] border-t-[4px] border-transparent border-t-black" />
        </div>
      </div>
      <div className="ml-[2px] mr-[3px] flex h-[646px] shrink-0"><Canvas /></div>
      <div className="flex flex-1 items-center border-t-[3px] border-white pl-[9px] text-[15px] text-[#888]">
        <span className="text-[#444]">...</span>
        <span className="ml-auto mr-[27px] tracking-[0.4px]">1.0.0007</span>
        <svg width="14" height="14" viewBox="0 0 14 14" className="mr-px mt-2" stroke="#999" strokeWidth="2" strokeDasharray="2 2"><path d="M1 12H12M5 8H12M9 4H12" /></svg>
      </div>
    </div>
  );
}

export default function App() {
  return (
    <div className="relative flex h-[1039px] w-[1920px] flex-col overflow-hidden bg-[#e9ebef] font-['Noto_Sans','Noto_Sans_CJK_SC',sans-serif] text-[15px] leading-none text-[#222]">
      <div className="flex h-[28px] shrink-0 items-center bg-white pl-[2px] pt-px text-[15.500px] text-[#999]">
        <svg width="20" height="20" viewBox="0 0 20 20" className="mr-[5px]"><rect width="20" height="20" fill="#222" /><path d="M1 1L6 5L8 2L10 7L17 12L10 19L3 13Z" fill="#f2f2f2" /><path d="M6 9L9 12L7 15Z" fill="#222" /><path d="M17 2C13 3 13 8 15.500 8C19 8 18 4 14.500 5.500" stroke="#fff" fill="none" strokeWidth="1.300" /></svg>
        Untitled - Rhinoceros 6 试用版 (21 Days Remaining) - [Perspective]
        <svg className="ml-auto mr-[25px] block" width="131" height="14" viewBox="0 0 131 14" fill="none" stroke="#666">
          <path d="M1 6.500H13M59.500 4.500H68.500V13.500H59.500ZM61.500 4V1.500H71.500V11.500H69M119 1L130 12M130 1L119 12" />
        </svg>
      </div>
      <div className="flex h-[27px] shrink-0 items-center bg-white pl-[7px] text-[15.200px] text-[#666]">
        {menus.map(([m, w]) => <span key={m} className={`${w} shrink-0 whitespace-nowrap`}>{m}</span>)}
      </div>
      <div className="flex h-[67px] shrink-0 border-t-2 border-[#e2e4e8] pb-[3px] pl-1">
        <div className="mr-0.5 w-[3px] border-x border-[#cdd3dc]" />
        <div className="flex flex-1 flex-col bg-white pl-px text-[15.300px] text-black">
          <div className="flex h-[18px] items-center">1 mesh added to selection.</div>
          <div className="flex h-[20px] items-center pt-px">Tap Alt to make a duplicate</div>
          <div className="flex flex-1 items-center border-t border-[#b8bfca] pb-[2px]"><b>Command:</b></div>
        </div>
        <div className="flex w-[22px] flex-col items-center bg-[#f0f0f0]">
          <svg width="20" height="62" viewBox="0 0 20 62" fill="none">
            <path d="M6 13L9.500 9L13 13M6 26L9.500 30L13 26" stroke="#555" strokeWidth="1.800" />
            <path d="M.5 39.500H17.500V49.500H.5ZM.5 51.500H17.500V61.500H.5Z" fill="#f0f0f0" stroke="#999" />
            <path d="M5.500 46.500L9 43L12.500 46.500ZM5.500 54.500L9 58L12.500 54.500Z" fill="#000" />
          </svg>
        </div>
      </div>

      <ToolRow h="h-[66px]" gear>
        <div className="mt-[4px] flex h-[24px] border-b border-[#b8c2d0] pl-[10px] text-[15.500px]">
          {tabs.map(([t, w], i) => <Tab key={t} label={t} w={w} active={i === 0} />)}
        </div>
        <div className="mt-[3px] flex pl-[9px]">
          {std.map(([c, t], i) => <div key={i} className="flex w-[28px] justify-center"><Ic tri={t} size={23}>{c}</Ic></div>)}
        </div>
      </ToolRow>
      <ToolRow h="h-[70px]" gear>
        <div className="mt-[4px] flex h-[24px] border-b border-[#b8c2d0] pl-[10px] text-[15.500px]">
          <Tab label="Enscape" w="w-[88px]" active />
          <Tab label="Enscape Capturing" w="w-[165px]" />
        </div>
        <div className="mt-[3px] flex items-center pl-[9px]">
          {ens.map((c, i) => (c === '|' ? <Sep key={i} /> : <div key={i} className="flex w-[28px] justify-center"><Ic size={23}>{c}</Ic></div>))}
        </div>
      </ToolRow>
      <ToolRow h="h-[61px]">
        <div className="mt-[5px] flex items-center pl-[9px]">
          {vr.map(([c, t], i) => (c === '|' ? <Sep key={i} /> : <div key={i} className="flex w-[28px] justify-center"><Ic size={22} tri={t}>{c}</Ic></div>))}
        </div>
      </ToolRow>

      <div className="flex h-[653px] shrink-0">
        <div className="w-[64px] shrink-0 border-r-2 border-[#d8dce4] bg-[#eceef2] pt-[3px]">
          <div className="mx-[3px] mb-[6px] h-[3px] border-y border-[#c9cfd9]" />
          <div className="grid grid-cols-2 gap-y-[6px] pr-[6px]">
            {side.map(([c, t], i) => <div key={i} className="flex h-[22px] w-[28px] items-center justify-center"><Ic tri={t} size={22}>{c}</Ic></div>)}
          </div>
        </div>
        <div className="flex flex-1 flex-col">
          <div className="relative h-[624px] border-b-2 border-[#a4a4b2] bg-[#b2b2b2]">
            <Scene />
            <div className="relative flex h-[22px] w-[118px] items-center rounded-br-md bg-[#8aa5c6] pb-[3px] pl-2 text-[15px] font-bold text-black">
              Perspective
              <span className="ml-auto mr-[3px] mt-[2px] flex h-[18px] items-center border-l border-black pl-px"><i className="border-x-[5px] border-t-[6px] border-transparent border-t-black" /></span>
            </div>
            <span className="absolute left-[47px] top-[539px] text-[16px] text-[#666]">z</span>
            <span className="absolute left-[84px] top-[565px] text-[16px] text-[#666]">y</span>
            <span className="absolute left-[48px] top-[592px] text-[16px] text-[#666]">x</span>
          </div>
          <div className="flex h-[27px] text-[15.400px]">
            <BottomTab label="Perspective" w="w-[107px]" active />
            <BottomTab label="Top" w="w-[51px]" />
            <BottomTab label="Front" w="w-[61px]" />
            <BottomTab label="Right" w="w-[61px]" />
            <BottomTab label={<svg width="12" height="12" viewBox="0 0 12 12" fill="none" stroke="#555" className="mr-1"><path d="M4.500.500H7.500V4.500H11.500V7.500H7.500V11.500H4.500V7.500H.5V4.500H4.500Z" /></svg>} w="w-[39px]" active />
          </div>
        </div>
        <RightStrip />
      </div>

      <div className="flex h-[36px] shrink-0 items-center pl-[4px] pt-[3px]">
        <div className="mr-[5px] h-[28px] w-[3px] border-x border-[#cdd3dc]" />
        {snaps.map(([t, w, s]) => (
          <div key={t} className={`${w} flex shrink-0 items-center whitespace-nowrap`}>
            {s === 2 ? (
              <span className="mr-[6px] h-[14px] w-[14px] border border-[#bbb] bg-[#dfdfdf]" />
            ) : (
              <span className="mr-[5px] flex h-4 w-4 items-center justify-center border border-[#333] bg-white">
                {s === 1 && <svg width="12" height="10" viewBox="0 0 12 10" fill="none" stroke="#333" strokeWidth="1.300"><path d="M1 5L4.500 8.500L11 1.500" /></svg>}
              </span>
            )}
            {t}
          </div>
        ))}
      </div>
      <div className="flex h-[22px] shrink-0 border-t border-[#bcc4dc] text-[15px] text-[#111]">
        {status.map(([t, w], i) => (
          <div key={i} className={`${w} flex shrink-0 items-center whitespace-nowrap border-r border-[#c3cadb] pt-px`}>{t}</div>
        ))}
        <div className="w-[7px]" />
      </div>
      <div className="flex flex-1 bg-linear-to-r from-[#15191d] via-[#2a1216] via-50% to-[#171b22]">
        <div className="ml-[680px] h-full w-[61px] bg-[#4a3a3c]" />
      </div>

      <Grasshopper />
    </div>
  );
}
